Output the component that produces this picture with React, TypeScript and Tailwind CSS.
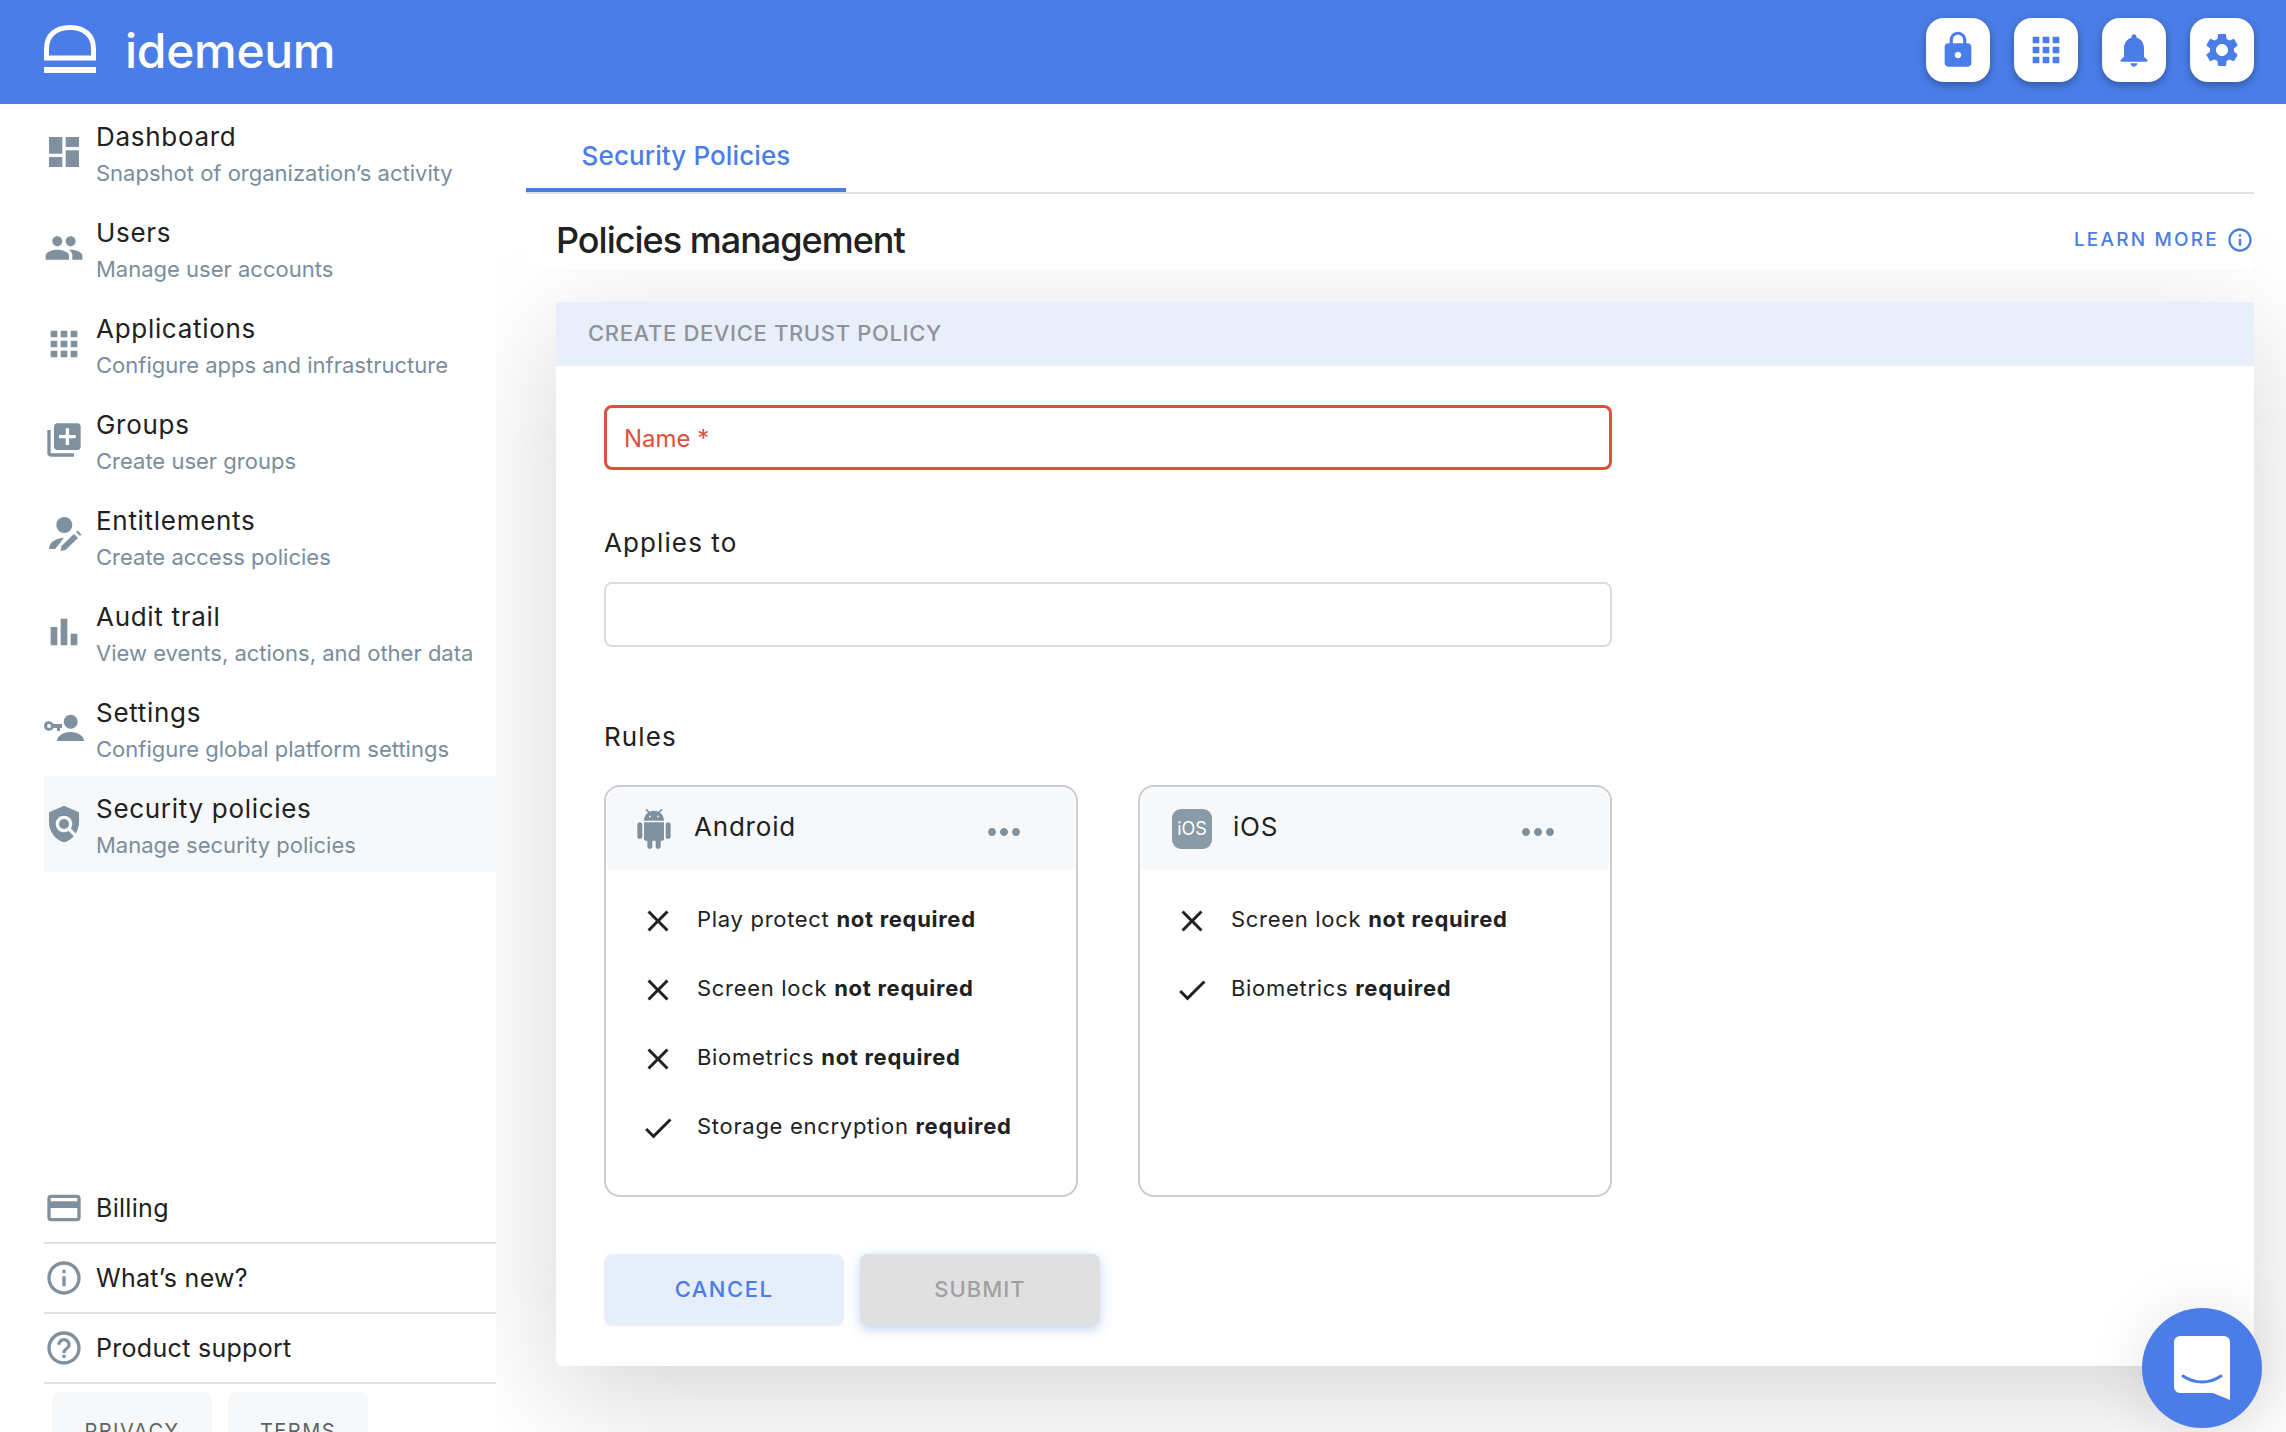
import type { ReactNode } from 'react'
import {
  MdDashboard,
  MdPeople,
  MdApps,
  MdLibraryAdd,
  MdBarChart,
  MdPolicy,
  MdCreditCard,
  MdInfoOutline,
  MdHelpOutline,
  MdLock,
  MdNotifications,
  MdSettings,
  MdClose,
  MdCheck,
  MdMoreHoriz,
} from 'react-icons/md'

function EntitlementsIcon({ className }: { className?: string }) {
  return (
    <svg viewBox="0 0 40 40" className={className} fill="currentColor">
      <circle cx="20.300" cy="9" r="8" />
      <path d="M5 33c0-6 5-10 15-11.500L16 27l-5 6z" />
      <path d="M16.500 35l1-5L30 18l4 4-12.500 12z" />
      <path d="M32 16l1.500-1.500 4 4L36 20z" />
    </svg>
  )
}

function KeyUserIcon({ className }: { className?: string }) {
  return (
    <svg viewBox="0 0 40 40" className={className} fill="currentColor">
      <circle cx="26.700" cy="13.700" r="7" />
      <path d="M13 33c0-5 6-9 13.500-9S40 28 40 33z" />
      <path
        fillRule="evenodd"
        d="M0 18a5 5 0 0 1 9.500-2H18v4h-2v3h-3v-3H9.500A5 5 0 0 1 0 18zm3 0a2 2 0 1 0 4 0 2 2 0 0 0-4 0z"
      />
    </svg>
  )
}

// full robot, the react-icons MdAndroid is only the head
function AndroidIcon({ className }: { className?: string }) {
  return (
    <svg viewBox="0 0 24 24" className={className} fill="currentColor">
      <path d="M6 18c0 .55.45 1 1 1h1v3.500c0 .83.67 1.500 1.500 1.500s1.500-.67 1.500-1.500V19h2v3.500c0 .83.67 1.500 1.500 1.500s1.500-.67 1.500-1.500V19h1c.55 0 1-.45 1-1V8H6v10zM3.500 8C2.670 8 2 8.670 2 9.500v7c0 .83.67 1.500 1.500 1.500S5 17.330 5 16.500v-7C5 8.670 4.330 8 3.500 8zm17 0c-.83 0-1.500.67-1.500 1.500v7c0 .83.67 1.500 1.500 1.500s1.500-.67 1.500-1.500v-7c0-.83-.67-1.500-1.500-1.500zm-4.970-5.840l1.300-1.300c.2-.2.2-.51 0-.71-.2-.2-.51-.2-.71 0l-1.480 1.480C13.850 1.230 12.950 1 12 1c-.96 0-1.860.23-2.660.63L7.850.15c-.2-.2-.51-.2-.71 0-.2.2-.2.51 0 .71l1.310 1.310C6.970 3.260 6 5.010 6 7h12c0-1.990-.97-3.750-2.470-4.840zM10 5H9V4h1v1zm5 0h-1V4h1v1z" />
    </svg>
  )
}

const navItems = [
  { title: 'Dashboard', sub: 'Snapshot of organization’s activity', icon: MdDashboard },
  { title: 'Users', sub: 'Manage user accounts', icon: MdPeople },
  { title: 'Applications', sub: 'Configure apps and infrastructure', icon: MdApps },
  { title: 'Groups', sub: 'Create user groups', icon: MdLibraryAdd },
  { title: 'Entitlements', sub: 'Create access policies', icon: EntitlementsIcon },
  { title: 'Audit trail', sub: 'View events, actions, and other data', icon: MdBarChart },
  { title: 'Settings', sub: 'Configure global platform settings', icon: KeyUserIcon },
  { title: 'Security policies', sub: 'Manage security policies', icon: MdPolicy, active: true },
]

const footerItems = [
  { title: 'Billing', icon: MdCreditCard },
  { title: 'What’s new?', icon: MdInfoOutline },
  { title: 'Product support', icon: MdHelpOutline },
]

function Rule({ ok, label, value }: { ok?: boolean; label: string; value: string }) {
  const Icon = ok ? MdCheck : MdClose
  return (
    <div className="flex h-[69px] items-center gap-[21px] pl-[34px]">
      <Icon className="h-9 w-9 shrink-0 text-[#212121]" />
      <span className="pb-[3px] text-[22px] tracking-[0.7px] text-[#212121]">
        {label} <b className="font-bold">{value}</b>
      </span>
    </div>
  )
}

function PlatformCard({ icon, name, gap, children }: { icon: ReactNode; name: string; gap: string; children: ReactNode }) {
  return (
    <div className="h-[412px] w-[474px] rounded-[16px] border-2 border-[#c9cdd1] bg-white">
      <div className="mx-px mt-px flex h-[81px] items-center rounded-t-[14px] bg-[#f7f8fa] pr-[47px]">
        {icon}
        <span className={`${gap} pb-[3px] text-[26px] leading-none tracking-[0.8px] text-[#212121]`}>{name}</span>
        <MdMoreHoriz className="mt-[7px] ml-auto h-12 w-12 text-[#7f919f]" />
      </div>
      <div className="pt-[17px]">{children}</div>
    </div>
  )
}

export default function App() {
  return (
    <div className="relative flex h-[1432px] flex-col overflow-hidden bg-white [font-family:Inter,sans-serif]">
      <header className="relative z-20 flex h-[104px] shrink-0 items-center justify-between bg-[#4a7de8] pr-[32px] pl-[44px]">
        <div className="mb-[2px] flex items-center gap-[29px]">
          <svg viewBox="0 0 52 48" className="mb-[4px] h-[48px] w-[52px]" fill="none" stroke="white" strokeWidth="5">
            <path d="M2.500 33V24C2.500 10 12 2.500 26 2.500S49.500 10 49.500 24V33H2.500z" />
            <path d="M0 45h52" strokeWidth="6" />
          </svg>
          <span className="text-[48px] leading-none font-medium tracking-[-0.3px] text-white">idemeum</span>
        </div>
        <div className="mb-[4px] flex gap-[24px]">
          {[MdLock, MdApps, MdNotifications, MdSettings].map((Icon, i) => (
            <button
              key={i}
              className="flex h-16 w-16 items-center justify-center rounded-[18px] bg-white text-[#4a7de8] shadow-[0_3px_8px_rgba(0,0,0,0.3)]"
            >
              <Icon className="h-10 w-10" />
            </button>
          ))}
        </div>
      </header>

      <div className="flex min-h-0 flex-1">
        <aside className="relative z-10 w-[496px] shrink-0 bg-white pl-[44px]">
          <nav>
            {navItems.map(({ title, sub, icon: Icon, active }) => (
              <div key={title} className={`flex h-[96px] items-center gap-[12px] ${active ? 'bg-[#f7f8fa]' : ''}`}>
                <Icon className="h-10 w-10 shrink-0 text-[#7f919f]" />
                <div className="pt-[5px]">
                  <div className="text-[26px] leading-[36px] tracking-[0.7px] text-[#212121]">{title}</div>
                  <div className="text-[22px] leading-[36px] text-[#7a8d9c]">{sub}</div>
                </div>
              </div>
            ))}
          </nav>
          <div className="mt-[302px]">
            {footerItems.map(({ title, icon: Icon }) => (
              <div key={title} className="flex h-[70px] items-center gap-[12px] border-b-2 border-[#e0e0e0]">
                <Icon className="h-10 w-10 shrink-0 text-[#7f919f]" />
                <span className="pt-[2px] text-[25px] tracking-[0.3px] text-[#212121]">{title}</span>
              </div>
            ))}
          </div>
          <div className="mt-[8px] ml-[8px] flex gap-[16px]">
            <div className="flex h-[78px] w-[160px] items-center justify-center rounded-[8px] bg-[#f7f8fa] text-[20px] tracking-[1.5px] text-[#616161]">
              PRIVACY
            </div>
            <div className="flex h-[78px] w-[140px] items-center justify-center rounded-[8px] bg-[#f7f8fa] text-[20px] tracking-[1.5px] text-[#616161]">
              TERMS
            </div>
          </div>
        </aside>

        <main className="min-w-0 flex-1 pr-[32px] pl-[30px]">
          <div className="relative z-10 h-[166px] bg-white">
            <div className="flex h-[90px] border-b-2 border-[#e0e0e0]">
              <div className="flex h-[88px] w-[320px] items-center justify-center rounded-t-[2px] border-b-4 border-[#4a7de8] pt-[19px] text-[26px] font-medium tracking-[0.1px] text-[#4a7de8]">
                Security Policies
              </div>
            </div>
            <div className="flex items-center justify-between pt-[26px] pl-[30px]">
              <h1 className="text-[36px] leading-[40px] font-medium tracking-[-1px] text-[#212121]">Policies management</h1>
              <a className="flex items-center gap-[7px] text-[19px] font-medium tracking-[2.2px] text-[#4a7de8]">
                LEARN MORE
                <MdInfoOutline className="h-7 w-7" />
              </a>
            </div>
          </div>

          <section className="mt-[32px] ml-[30px] h-[1064px] rounded-b-[6px] bg-white shadow-[0_30px_120px_rgba(0,0,0,0.17)]">
            <div className="flex h-[64px] items-center bg-[#e8effb] pb-[2px] pl-[32px] text-[22px] font-medium tracking-[0.65px] text-[#8f9296]">
              CREATE DEVICE TRUST POLICY
            </div>
            <div className="pt-[39px] pl-[48px]">
              <input
                placeholder="Name *"
                className="block h-[65px] w-[1008px] rounded-[8px] border-[3px] border-[#e04f3e] px-[17px] pt-[2px] text-[24px] outline-none placeholder:text-[#e04f3e]"
              />
              <div className="mt-[55px] text-[26px] leading-[36px] tracking-[1.1px] text-[#212121]">Applies to</div>
              <input className="mt-[21px] block h-[65px] w-[1008px] rounded-[8px] border-2 border-[#dcdcdc] outline-none" />
              <div className="mt-[72px] text-[26px] leading-[36px] tracking-[1.1px] text-[#212121]">Rules</div>
              <div className="mt-[30px] flex gap-[60px]">
                <PlatformCard icon={<AndroidIcon className="ml-[27px] h-10 w-10 shrink-0 text-[#7f919f]" />} name="Android" gap="ml-[20px]">
                  <Rule label="Play protect" value="not required" />
                  <Rule label="Screen lock" value="not required" />
                  <Rule label="Biometrics" value="not required" />
                  <Rule ok label="Storage encryption" value="required" />
                </PlatformCard>
                <PlatformCard
                  icon={
                    <div className="ml-[31px] flex h-10 w-10 shrink-0 items-center justify-center rounded-[9px] bg-[#8a9ba8] text-[18px] text-white">
                      iOS
                    </div>
                  }
                  name="iOS"
                  gap="ml-[21px]"
                >
                  <Rule label="Screen lock" value="not required" />
                  <Rule ok label="Biometrics" value="required" />
                </PlatformCard>
              </div>
              <div className="mt-[57px] flex gap-[16px]">
                <button className="h-[72px] w-[240px] rounded-[8px] bg-[#e6eefb] pb-[2px] text-[22px] font-medium tracking-[1.5px] text-[#4a7de8]">
                  CANCEL
                </button>
                <button className="h-[72px] w-[240px] rounded-[8px] bg-[#e0e0e0] pb-[2px] text-[22px] font-medium tracking-[1px] text-[#a0a0a0] shadow-[0_3px_12px_rgba(74,125,232,0.35)]">
                  SUBMIT
                </button>
              </div>
            </div>
          </section>
        </main>
      </div>

      {/* Chat launcher */}
      <button className="absolute top-[1308px] left-[2142px] z-30 flex h-[120px] w-[120px] items-center justify-center rounded-full bg-[#4a7de8] shadow-[0_0_60px_rgba(0,0,0,0.1)]">
        <svg viewBox="0 0 56 64" className="h-[64px] w-[56px]">
          <path d="M6 0h44a6 6 0 0 1 6 6v58l-17-7H6a6 6 0 0 1-6-6V6a6 6 0 0 1 6-6z" fill="white" />
          <path d="M9 40c12 8 26 8 38 0" fill="none" stroke="#4a7de8" strokeWidth="3" strokeLinecap="round" />
        </svg>
      </button>
    </div>
  )
}
